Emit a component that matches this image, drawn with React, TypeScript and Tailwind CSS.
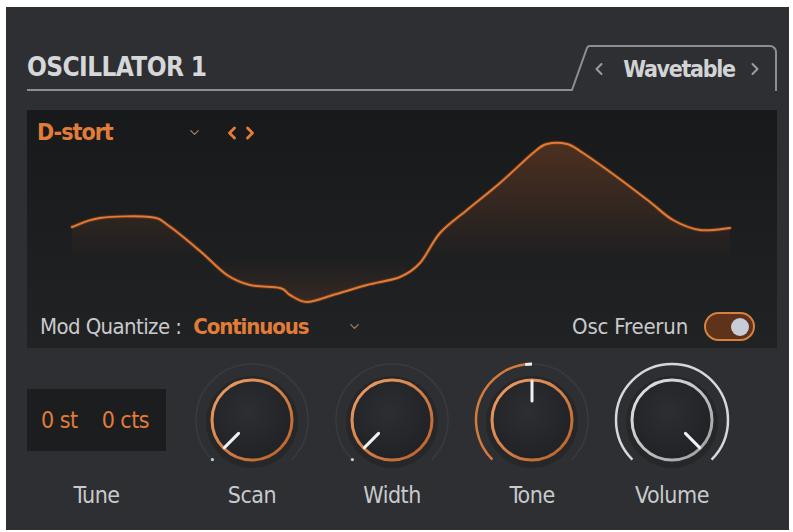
import React from "react";
import { ChevronDown, ChevronLeft, ChevronRight } from "lucide-react";

type Pt = [number, number];

const wave: Pt[] = [
  [45, 117], [73, 108], [123, 107], [142, 116], [173, 141], [200, 165],
  [223, 175], [253, 178], [263, 185], [280, 192], [306, 185], [340, 175],
  [373, 167], [393, 153], [413, 123], [440, 100], [473, 73], [506, 43],
  [520, 34], [540, 34], [556, 43], [590, 67], [623, 92], [646, 110],
  [673, 120], [703, 118],
];

// catmull-rom -> cubic bezier
const smoothPath = (pts: Pt[]) => {
  let d = `M${pts[0][0]},${pts[0][1]}`;
  for (let i = 0; i < pts.length - 1; i++) {
    const p0 = pts[i - 1] || pts[i];
    const p1 = pts[i];
    const p2 = pts[i + 1];
    const p3 = pts[i + 2] || p2;
    const c1x = p1[0] + (p2[0] - p0[0]) / 6;
    const c1y = p1[1] + (p2[1] - p0[1]) / 6;
    const c2x = p2[0] - (p3[0] - p1[0]) / 6;
    const c2y = p2[1] - (p3[1] - p1[1]) / 6;
    d += ` C${c1x},${c1y} ${c2x},${c2y} ${p2[0]},${p2[1]}`;
  }
  return d;
};

const Waveform = () => {
  const line = smoothPath(wave);
  const area = `${line} L703,150 L45,150 Z`;
  return (
    <svg className="absolute inset-0" width="750" height="238" viewBox="0 0 750 238">
      <defs>
        <linearGradient id="wfill" x1="0" y1="0" x2="0" y2="238" gradientUnits="userSpaceOnUse">
          <stop offset="0.12" stopColor="#c9652a" stopOpacity="0.3" />
          <stop offset="0.63" stopColor="#c9652a" stopOpacity="0" />
          <stop offset="0.82" stopColor="#c9652a" stopOpacity="0.14" />
        </linearGradient>
      </defs>
      <path d={area} fill="url(#wfill)" />
      <path d={line} fill="none" stroke="#7a3d18" strokeWidth="4" strokeLinecap="round" opacity="0.6" />
      <path d={line} fill="none" stroke="#e07a38" strokeWidth="2" strokeLinecap="round" />
    </svg>
  );
};

const polar = (r: number, deg: number): Pt => {
  const a = (deg * Math.PI) / 180;
  return [60 + r * Math.sin(a), 60 - r * Math.cos(a)];
};

const arc = (r: number, a0: number, a1: number) => {
  const [x0, y0] = polar(r, a0);
  const [x1, y1] = polar(r, a1);
  const large = a1 - a0 > 180 ? 1 : 0;
  return `M${x0},${y0} A${r},${r} 0 ${large} 1 ${x1},${y1}`;
};

type KnobProps = {
  angle: number;
  tone: "orange" | "white";
  valueArc?: boolean;
};

const Knob = ({ angle, tone, valueArc }: KnobProps) => {
  const [px0, py0] = polar(19, angle);
  const [px1, py1] = polar(39, angle);
  const [dx, dy] = polar(56, -135);
  const id = `ring-${tone}-${angle}`;
  const white = tone === "white";
  return (
    <svg width="120" height="120" viewBox="0 0 120 120">
      <defs>
        <linearGradient id={id} x1="0" y1="0" x2="1" y2="1">
          <stop offset="0" stopColor={white ? "#e4e6e8" : "#f0a06a"} />
          <stop offset="1" stopColor={white ? "#9a9c9f" : "#b95f27"} />
        </linearGradient>
        <radialGradient id={`${id}-body`} cx="0.45" cy="0.4" r="0.7">
          <stop offset="0" stopColor="#2c2e31" />
          <stop offset="1" stopColor="#1f2023" />
        </radialGradient>
      </defs>
      <path d={arc(56, -135, 135)} fill="none" stroke="#393b3f" strokeWidth="1.5" />
      {valueArc && !white && (
        <>
          <path d={arc(56, -135, 0)} fill="none" stroke="#d47a3e" strokeWidth="2.5" />
          <path d={arc(56, -7, 0)} fill="none" stroke="#eceef0" strokeWidth="3" />
        </>
      )}
      {valueArc && white && (
        <path d={arc(56, -135, 135)} fill="none" stroke="#d6d8da" strokeWidth="2.5" />
      )}
      {!valueArc && <circle cx={dx} cy={dy} r="1.6" fill="#c8cacc" />}
      <circle cx="60" cy="62" r="46" fill="#000" opacity="0.16" />
      <circle cx="60" cy="60" r="40" fill={`url(#${id}-body)`} stroke={`url(#${id})`} strokeWidth="3" />
      <line x1={px0} y1={py0} x2={px1} y2={py1} stroke="#eef0f2" strokeWidth="3" strokeLinecap="round" />
    </svg>
  );
};

const knobs: { label: string; angle: number; tone: "orange" | "white"; valueArc?: boolean }[] = [
  { label: "Scan", angle: -135, tone: "orange" },
  { label: "Width", angle: -135, tone: "orange" },
  { label: "Tone", angle: 0, tone: "orange", valueArc: true },
  { label: "Volume", angle: 135, tone: "white", valueArc: true },
];

export default function App() {
  return (
    <div className="w-[793px] h-[532px] bg-white pt-[7px] pl-[6px] font-['DejaVu_Sans_Condensed',sans-serif]">
      <div className="w-[783px] h-[523px] bg-[#2d2f32] pl-[21px] pr-[12px] pt-[38px] flex flex-col">
        {/* header */}
        <div className="flex items-end h-[46px]">
          <div className="flex-1 h-full border-b-2 border-[#8c8e91] flex items-end pb-[9px]">
            <span className="text-[26px] leading-none font-bold text-[#d6d7d8] tracking-[-0.6px]">
              OSCILLATOR 1
            </span>
          </div>
          <svg width="19" height="46" viewBox="0 0 19 46" className="shrink-0">
            <path d="M0,45 L2,45 L17,3 Q18,1 20,1" fill="none" stroke="#8c8e91" strokeWidth="2" />
          </svg>
          <div className="w-[188px] h-full border-t-2 border-r-2 border-[#8c8e91] rounded-tr-[7px] flex items-center pl-0 pr-[10px]">
            <ChevronLeft size={20} strokeWidth={2.5} className="text-[#9a9c9f]" />
            <span className="flex-1 text-center text-[23px] font-bold leading-none text-[#d2d3d4] tracking-[-1.3px] pl-[4px]">
              Wavetable
            </span>
            <ChevronRight size={20} strokeWidth={2.5} className="text-[#9a9c9f]" />
          </div>
        </div>

        {/* display */}
        <div className="relative mt-[19px] h-[238px] bg-gradient-to-b from-[#18191b] to-[#212224] flex flex-col justify-between">
          <Waveform />
          <div className="relative flex items-center pl-[10px] pt-[11px] text-[#e27c39]">
            <span className="text-[23px] font-bold leading-none w-[150px] tracking-[-1px]">D-stort</span>
            <ChevronDown size={15} strokeWidth={2} className="text-[#a97d63]" />
            <ChevronLeft size={20} strokeWidth={3.5} className="ml-[20px]" />
            <ChevronRight size={20} strokeWidth={3.5} className="-ml-[2px]" />
          </div>
          <div className="relative flex items-center pl-[13px] pr-[22px] pb-[7px]">
            <span className="text-[22px] leading-none text-[#c9cacc] tracking-[-0.6px]">Mod Quantize :</span>
            <span className="ml-[12px] text-[22px] font-bold leading-none text-[#e27c39] w-[154px] tracking-[-1.1px]">
              Continuous
            </span>
            <ChevronDown size={15} strokeWidth={2} className="text-[#a97d63]" />
            <span className="ml-auto text-[22px] leading-none text-[#c9cacc] tracking-[-0.2px]">Osc Freerun</span>
            <div className="ml-[16px] w-[51px] h-[29px] rounded-full border-2 border-[#d7803f] bg-[#5e3319] flex items-center justify-end pr-[4px]">
              <div className="w-[18px] h-[18px] rounded-full bg-[#c7ccd6]" />
            </div>
          </div>
        </div>

        {/* controls */}
        <div className="flex pt-[12px]">
          <div className="w-[139px] flex flex-col items-center">
            <div className="h-[120px] w-full flex items-center">
              <div className="w-full h-[62px] bg-[#1c1d1f] flex items-center pl-[14px] gap-[24px] text-[23px] leading-none text-[#e27c39] tracking-[-0.5px]">
                <span>0 st</span>
                <span>0 cts</span>
              </div>
            </div>
            <span className="h-[30px] flex items-center text-[23px] text-[#c9cacc] tracking-[-0.5px]">Tune</span>
          </div>
          <div className="ml-[16px] flex">
            {knobs.map((k) => (
              <div key={k.label} className="w-[140px] flex flex-col items-center">
                <Knob angle={k.angle} tone={k.tone} valueArc={k.valueArc} />
                <span className="h-[30px] flex items-center text-[23px] text-[#c9cacc] tracking-[-0.5px]">
                  {k.label}
                </span>
              </div>
            ))}
          </div>
        </div>
      </div>
    </div>
  );
}
